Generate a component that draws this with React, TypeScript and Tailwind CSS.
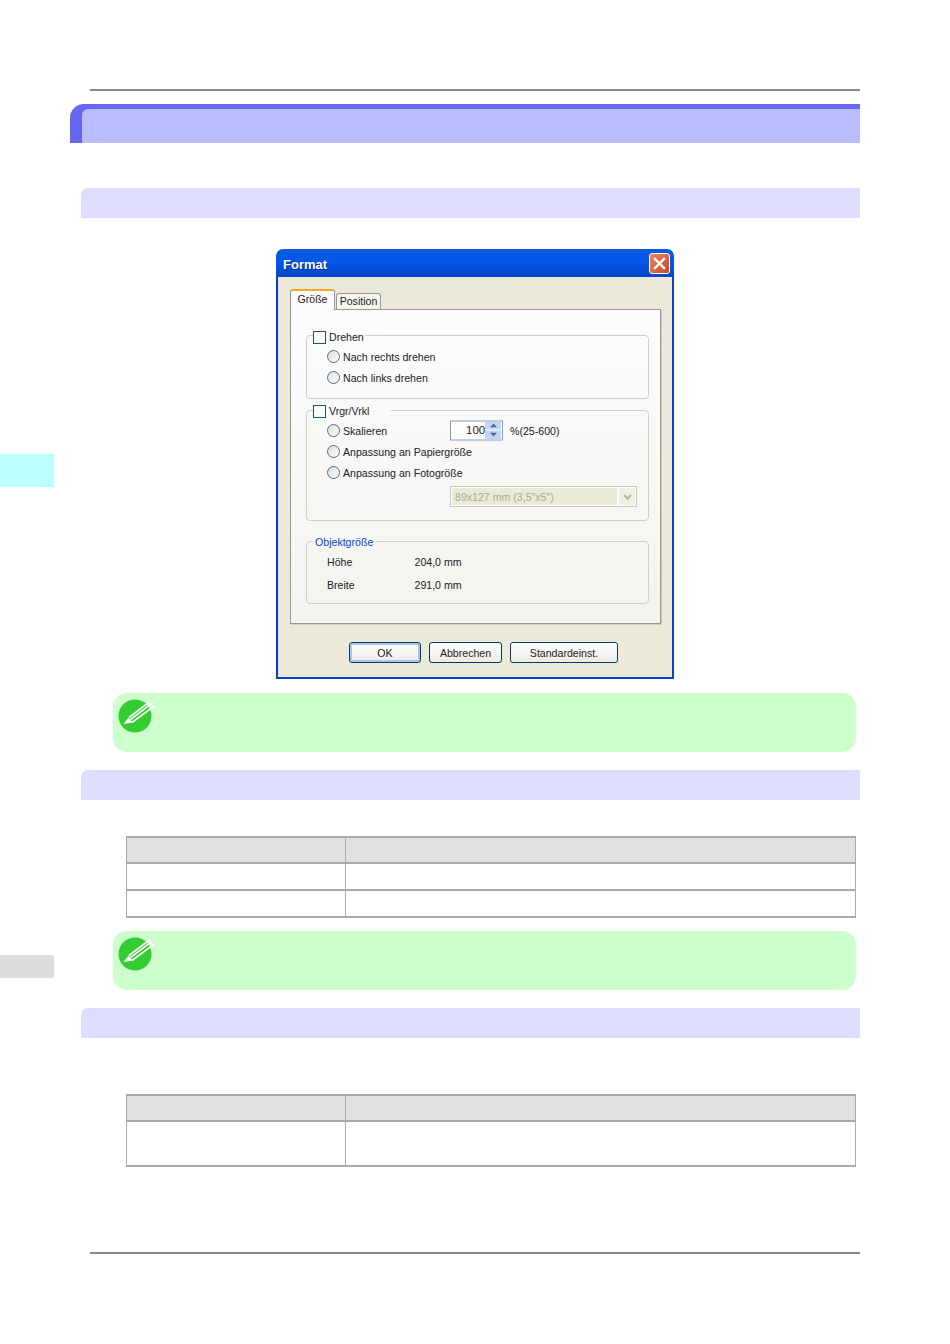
const DIALOG_FONT = "font-['Liberation_Sans',sans-serif] text-[10.6px] leading-[14px] text-[#222]";

function Radio() {
  return (
    <span className="block h-[13px] w-[13px] shrink-0 rounded-full border border-[#4a6f92] bg-gradient-to-br from-[#dcdcd7] to-white" />
  );
}

function Checkbox() {
  return <span className="block h-[13px] w-[13px] shrink-0 border border-[#1c5180] bg-[#fbfbf8]" />;
}

function RadioRow({ label, className }: { label: string; className?: string }) {
  return (
    <div className={`flex h-[13px] items-center gap-[3px] pl-[20px] ${className ?? ''}`}>
      <Radio />
      <span>{label}</span>
    </div>
  );
}

function DialogButton({ label, width, active }: { label: string; width: string; active?: boolean }) {
  return (
    <div
      className={`flex h-[21px] items-center justify-center rounded-[3px] border border-[#003c74] bg-gradient-to-b from-white to-[#ecebe5] ${width} ${
        active ? 'shadow-[inset_0_0_0_2px_#a9c5ec]' : ''
      }`}
    >
      {label}
    </div>
  );
}

function FormatDialog() {
  return (
    <div className={`ml-[195px] mt-[31px] w-[398px] ${DIALOG_FONT}`}>
      {/* Title bar */}
      <div className="flex h-[28px] items-center justify-between rounded-t-[7px] bg-gradient-to-b from-[#0a5be0] via-[#0355e6] to-[#0446c8] pl-[7px] pr-[4px]">
        <span className="translate-y-[2px] text-[13px] font-bold text-white [text-shadow:1px_1px_0_#0a2f8a]">Format</span>
        <span className="flex h-[21px] w-[21px] items-center justify-center rounded-[3px] border border-white bg-gradient-to-br from-[#e8886a] to-[#c9431c]">
          <svg width="13" height="13" viewBox="0 0 13 13">
            <path d="M2 2 L11 11 M11 2 L2 11" stroke="#fff" strokeWidth="2.4" strokeLinecap="square" />
          </svg>
        </span>
      </div>

      {/* Window body */}
      <div className="h-[402px] border-x-2 border-b-2 border-[#0b3fd0] bg-[#ece9d8] pl-[12px] pr-[11px] pt-[12px]">
        {/* Tabs */}
        <div className="flex h-[20px] items-end">
          <div className="relative z-10 -mb-px flex h-[21px] w-[45px] items-center justify-center rounded-t-[3px] border-x border-[#919b9c] border-t-2 border-t-[#f5a623] bg-[#fcfcfe] pb-[3px]">
            Größe
          </div>
          <div className="ml-px flex h-[16px] w-[45px] items-center justify-center rounded-t-[3px] border-x border-t border-[#919b9c] bg-[#f6f5ee] pb-px">
            Position
          </div>
        </div>

        {/* Tab page */}
        <div className="h-[315px] border border-[#919b9c] bg-gradient-to-b from-[#fcfcfe] to-[#f4f3ee] pl-[15px] pr-[11px] pt-[25px] shadow-[1px_1px_0_#d0cdbc]">
          {/* Drehen */}
          <div className="relative h-[64px] rounded-[4px] border border-[#d0d0bf] pt-[14px]">
            <div className="absolute -top-[5px] left-[6px] flex h-[13px] items-center gap-[3px] bg-[#fbfbfa] pr-px">
              <Checkbox />
              <span className="-translate-y-px">Drehen</span>
            </div>
            <RadioRow label="Nach rechts drehen" />
            <RadioRow label="Nach links drehen" className="mt-[8px]" />
          </div>

          {/* Vrgr/Vrkl */}
          <div className="relative mt-[11px] h-[111px] rounded-[4px] border border-[#d0d0bf] pt-[13px]">
            <div className="absolute -top-[6px] left-[6px] flex h-[13px] w-[78px] items-center gap-[3px] bg-[#faf9f7]">
              <Checkbox />
              <span className="-translate-y-px">Vrgr/Vrkl</span>
            </div>
            <div className="flex h-[13px] items-center pl-[20px]">
              <Radio />
              <span className="ml-[3px] w-[107px]">Skalieren</span>
              <div className="flex h-[20px] w-[53px] -translate-y-[0.5px] items-center border border-[#7f9db9] bg-white pl-[15px] pr-px">
                <span className="w-[20px] -translate-y-px text-[11.5px]">100</span>
                <div className="flex h-[18px] w-[16px] flex-col gap-px">
                  {[false, true].map((down) => (
                    <span key={String(down)} className="flex h-[8.5px] items-center justify-center rounded-[1px] bg-[#c3d3f5]">
                      <svg width="7" height="4" viewBox="0 0 7 4">
                        <path d={down ? 'M0 0 H7 L3.5 4 Z' : 'M0 4 H7 L3.5 0 Z'} fill="#4d6185" />
                      </svg>
                    </span>
                  ))}
                </div>
              </div>
              <span className="ml-[7px]">%(25-600)</span>
            </div>
            <RadioRow label="Anpassung an Papiergröße" className="mt-[8px]" />
            <RadioRow label="Anpassung an Fotogröße" className="mt-[8px]" />
            <div className="ml-[143px] mt-[7px] flex h-[21px] w-[187px] items-center border border-[#c9c7ba] bg-white p-px">
              <div className="flex h-full flex-1 items-center bg-[#ece9d8] pl-[3px] text-[#aca899]">89x127 mm (3,5"x5")</div>
              <div className="ml-[2px] flex h-full w-[16px] items-center justify-center rounded-[1px] bg-[#f0efe6]">
                <svg width="9" height="6" viewBox="0 0 9 6">
                  <path d="M1 1 L4.5 4.5 L8 1" fill="none" stroke="#b5b2a4" strokeWidth="2" />
                </svg>
              </div>
            </div>
          </div>

          {/* Objektgröße */}
          <div className="relative mt-[20px] h-[63px] rounded-[4px] border border-[#d0d0bf] pl-[20px] pt-[13px]">
            <div className="absolute -top-[7px] left-[5px] bg-[#f7f6f3] px-[3px] text-[#0046d5]">Objektgröße</div>
            <div className="flex h-[14px] items-center">
              <span className="w-[87.5px]">Höhe</span>
              <span>204,0 mm</span>
            </div>
            <div className="mt-[9px] flex h-[14px] items-center">
              <span className="w-[87.5px]">Breite</span>
              <span>291,0 mm</span>
            </div>
          </div>
        </div>

        {/* Buttons */}
        <div className="ml-[59px] mt-[18px] flex gap-[8px]">
          <DialogButton label="OK" width="w-[72px]" active />
          <DialogButton label="Abbrechen" width="w-[73px]" />
          <DialogButton label="Standardeinst." width="w-[108px]" />
        </div>
      </div>
    </div>
  );
}

function NoteBox({ className }: { className: string }) {
  return (
    <div className={`ml-[32px] h-[59px] w-[743px] rounded-[14px] bg-[#ccffcc] pl-[4px] pt-[5px] ${className}`}>
      <svg width="38" height="36" viewBox="0 0 38 36">
        <circle cx="18" cy="18" r="16.5" fill="#33cc33" />
        <path d="M6.5 26 L11.5 19.5 L15.5 24.5 Z" fill="#fff" />
        <path
          d="M12 19.5 L31.5 4.5 L36 9 L15 24.5 M13.5 21.7 L33 6.7"
          stroke="#fff"
          strokeWidth="1.6"
          fill="none"
        />
      </svg>
    </div>
  );
}

function SubHeading({ className }: { className: string }) {
  return <div className={`h-[30px] rounded-tl-[7px] bg-[#ddddff] ${className}`} />;
}

function SpecTable({ rows }: { rows: string[] }) {
  return (
    <div className="ml-[45px] w-[730px] border-x border-t-2 border-[#aaaaaa]">
      <div className="flex h-[26px] border-b-2 border-[#aaaaaa] bg-[#e0e0e0]">
        <div className="w-[219px] border-r border-[#aaaaaa]" />
      </div>
      {rows.map((height, i) => (
        <div key={i} className={`flex border-b-2 border-[#aaaaaa] ${height}`}>
          <div className="w-[219px] border-r border-[#aaaaaa]" />
        </div>
      ))}
    </div>
  );
}

export default function App() {
  return (
    <div className="flex h-[1344px] w-[950px] overflow-hidden bg-white">
      {/* Side tabs */}
      <div className="w-[70px] shrink-0">
        <div className="mt-[454px] h-[33px] w-[54px] bg-[#bbffff]" />
        <div className="mt-[468px] h-[23px] w-[54px] rounded-r-[3px] bg-[#dddddd]" />
      </div>

      <div className="w-[790px] shrink-0">
        <div className="ml-[20px] mt-[89px] h-[2px] bg-[#888888]" />

        <div className="mt-[13px] h-[39px] rounded-tl-[14px] bg-[#6666ee] pl-[12px] pt-[5px]">
          <div className="h-full rounded-tl-[6px] bg-[#bbbbff]" />
        </div>

        <div className="ml-[11px]">
          <SubHeading className="mt-[45px]" />
          <FormatDialog />
          <NoteBox className="mt-[14px]" />
          <SubHeading className="mt-[18px]" />
          <div className="mt-[36px]">
            <SpecTable rows={['h-[27px]', 'h-[27px]']} />
          </div>
          <NoteBox className="mt-[13px]" />
          <SubHeading className="mt-[18px]" />
          <div className="mt-[56px]">
            <SpecTable rows={['h-[45px]']} />
          </div>
        </div>

        <div className="ml-[20px] mt-[85px] h-[2px] bg-[#888888]" />
      </div>
    </div>
  );
}
